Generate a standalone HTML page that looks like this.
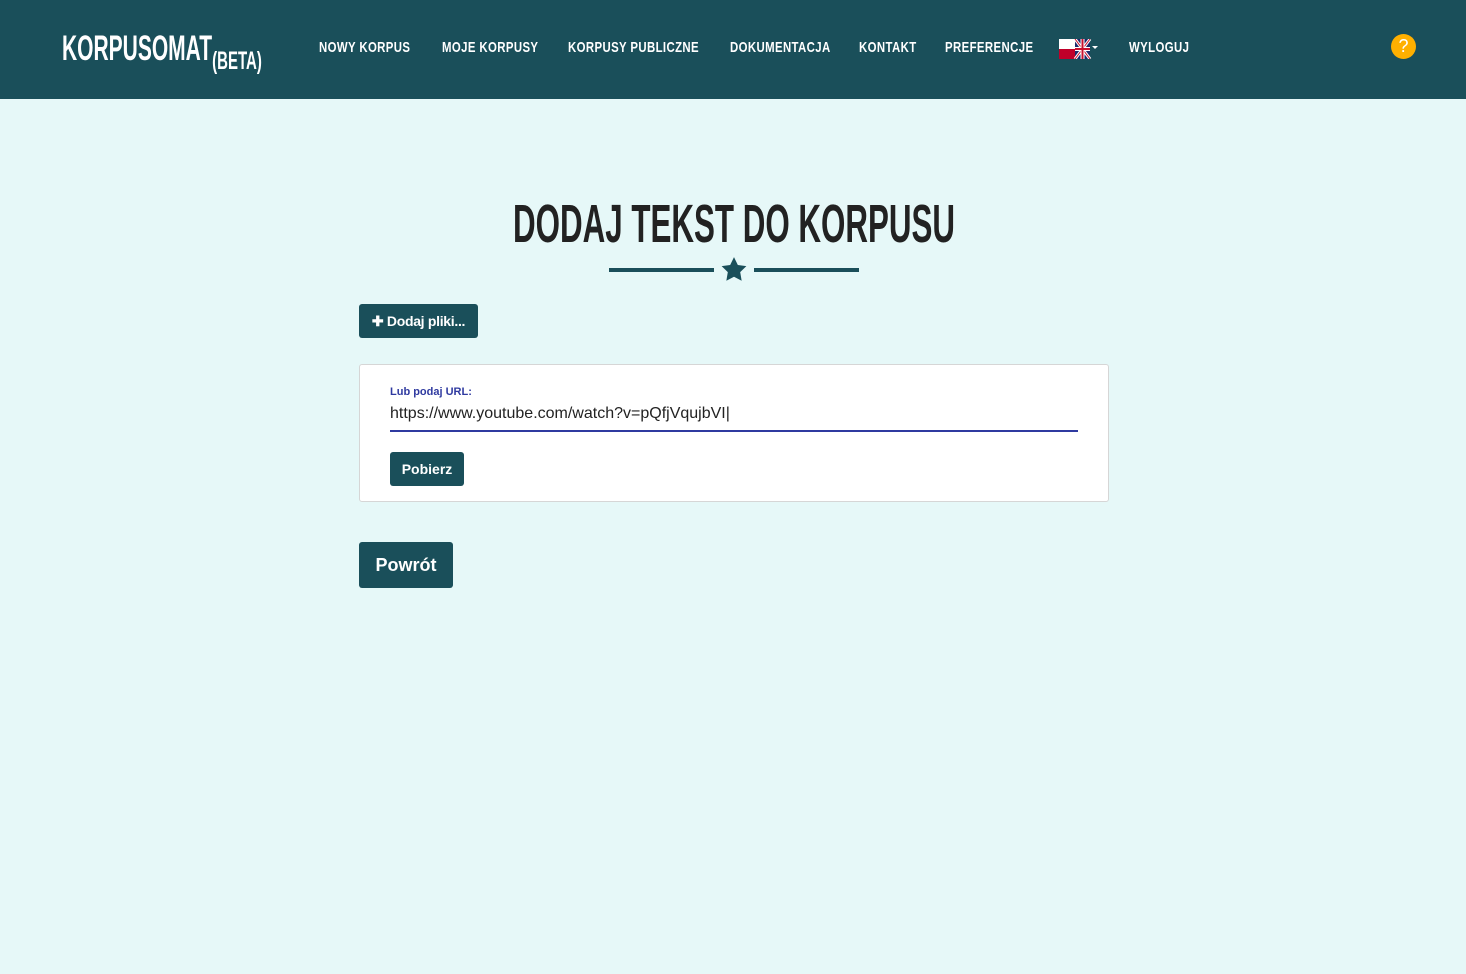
<!DOCTYPE html>
<html><head><meta charset="utf-8"><style>
*{margin:0;padding:0;box-sizing:border-box}
body{width:1466px;height:974px;background:#e6f8f8;font-family:"Liberation Sans",sans-serif;position:relative;overflow:hidden}
.hdr{position:absolute;left:0;top:0;width:1466px;height:99px;background:#1a4f5a}
.c{position:absolute;white-space:nowrap;font-weight:bold;color:#fff;transform-origin:0 0}
.nav{font-size:15px;top:39px;transform:scaleX(.76);letter-spacing:.5px}
.btn{position:absolute;background:#1a4f5a;color:#fff;border-radius:3px;font-weight:bold;display:flex;align-items:center;justify-content:center}
</style></head><body>
<div class="hdr">
<div class="c" style="left:62px;top:29px;font-size:35px;transform:scaleX(.6)">KORPUSOMAT<span style="font-size:25px;position:relative;top:9px">(BETA)</span></div>
<div class="c nav" style="left:319px">NOWY KORPUS</div>
<div class="c nav" style="left:442px">MOJE KORPUSY</div>
<div class="c nav" style="left:568px">KORPUSY PUBLICZNE</div>
<div class="c nav" style="left:730px">DOKUMENTACJA</div>
<div class="c nav" style="left:859px">KONTAKT</div>
<div class="c nav" style="left:945px">PREFERENCJE</div>
<svg style="position:absolute;left:1059px;top:39px" width="42" height="20" viewBox="0 0 42 20">
<rect x="0" y="0" width="16" height="10" fill="#fff"/><rect x="0" y="10" width="16" height="10" fill="#c0002a"/>
<rect x="16" y="0" width="15" height="20" fill="#1a2a6c"/>
<path d="M16 0L31 20M31 0L16 20" stroke="#fff" stroke-width="3"/><path d="M16 0L31 20M31 0L16 20" stroke="#c8102e" stroke-width="1"/>
<path d="M23.5 0V20M16 10H31" stroke="#fff" stroke-width="4"/><path d="M23.5 0V20M16 10H31" stroke="#c8102e" stroke-width="2"/>
<path d="M33 7h6l-3 3z" fill="#fff"/></svg>
<div class="c nav" style="left:1129px">WYLOGUJ</div>
<div style="position:absolute;left:1391px;top:34px;width:25px;height:25px;border-radius:50%;background:#ffb000;color:#fff;font-size:18px;text-align:center;line-height:25px">?</div>
</div>
<div class="c" style="left:513px;top:193px;font-size:54px;color:#222;transform:scaleX(.58)">DODAJ TEKST DO KORPUSU</div>
<div style="position:absolute;left:609px;top:268px;width:105px;height:4px;background:#1a4f5a"></div>
<div style="position:absolute;left:754px;top:268px;width:105px;height:4px;background:#1a4f5a"></div>
<svg style="position:absolute;left:720px;top:256px" width="28" height="27" viewBox="0 0 24 24"><path d="M12 1l3.4 7 7.6 1-5.5 5.3 1.3 7.7L12 18.4 5.2 22l1.3-7.7L1 9l7.6-1z" fill="#1a4f5a"/></svg>
<div class="btn" style="left:359px;top:304px;width:119px;height:34px;font-size:14px;letter-spacing:-.3px">✚&nbsp;Dodaj pliki...</div>
<div style="position:absolute;left:359px;top:364px;width:750px;height:138px;background:#fff;border:1px solid #d6d6d6;border-radius:3px">
<div style="position:absolute;left:30px;top:21px;font-size:11px;font-weight:bold;color:#2f3aa0">Lub podaj URL:</div>
<div style="position:absolute;left:30px;top:40px;font-size:16px;color:#222">https://www.youtube.com/watch?v=pQfjVqujbVI|</div>
<div style="position:absolute;left:30px;top:65px;width:688px;height:2px;background:#2f3aa0"></div>
<div class="btn" style="left:30px;top:87px;width:74px;height:34px;font-size:14px">Pobierz</div>
</div>
<div class="btn" style="left:359px;top:542px;width:94px;height:46px;font-size:18px">Powrót</div>
</body></html>
